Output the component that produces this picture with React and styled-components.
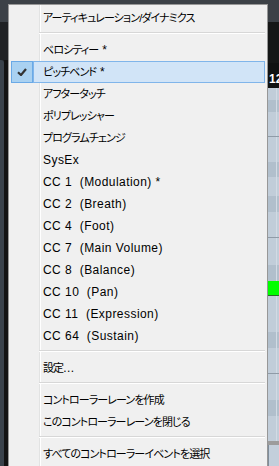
import React from 'react';
import styled, { createGlobalStyle, css } from 'styled-components';

const GlobalStyle = createGlobalStyle`
  html, body {
    margin: 0;
    padding: 0;
    background: #1e2023;
  }
`;

const LIGHT = '#c1cdd9';
const DARK = '#b1bfcc';

const Screen = styled.div`
  position: relative;
  width: 279px;
  height: 466px;
  overflow: hidden;
  display: flex;
  flex-direction: column;
  background: #1e2023;
`;

const TopBar = styled.div`
  flex-shrink: 0;
  height: 22px;
  background: #3c4147;
`;

const Body = styled.div`
  flex: 1;
  display: flex;
  min-height: 0;
`;

const SideStrip = styled.div`
  flex-shrink: 0;
  width: 8px;
  display: flex;
  flex-direction: column;
`;

const SideTop = styled.div`
  height: 38px;
  background: #1f2124;
`;

const SideRail = styled.div`
  flex: 1;
  display: flex;

  &::before {
    content: '';
    width: 4px;
    background: #3a424b;
    border-top-right-radius: 3px;
  }

  &::after {
    content: '';
    flex: 1;
    background: #131313;
  }
`;

const Main = styled.div`
  flex: 1;
  min-width: 0;
  display: flex;
  flex-direction: column;
`;

const RulerTop = styled.div`
  height: 41px;
  background: #151717;
`;

const Ruler = styled.div`
  height: 25px;
  box-sizing: border-box;
  padding: 0 0 2px 261px;
  display: flex;
  align-items: flex-end;
  background: #101212;
  color: #fff;
  font: bold 12px 'Liberation Sans', sans-serif;
  white-space: nowrap;
`;

const Lane = styled.div`
  box-sizing: border-box;
  height: ${p => p.$h}px;
  background-color: ${p => p.$color};
  background-image: linear-gradient(to right, transparent 268px, #d2dbe4 268px, #d2dbe4 269px, transparent 269px);
  ${p => p.$line && css`border-bottom: 1px solid #8f9ba7;`}
  ${p => p.$note && css`
    background: #00ff00;
    border-bottom: 1px solid #2a6a2a;
  `}
`;

const GrayBand = styled.div`
  height: 4px;
  background: #9c9c9c;
`;

const BottomStrip = styled.div`
  flex: 1;
  display: flex;
`;

const BottomGray = styled.div`
  width: 50px;
  background: #a6a6a6;
`;

const BottomCells = styled.div`
  flex: 1;
  background: repeating-linear-gradient(to right, #7f8d9b 0, #7f8d9b 1px, #c3cfdb 1px, #c3cfdb 11.67px);
`;

const Menu = styled.ul`
  position: absolute;
  left: 8px;
  top: 4px;
  width: 260px;
  box-sizing: border-box;
  margin: 0;
  padding: 2px;
  list-style: none;
  background-color: #f0f0f0;
  background-image: linear-gradient(to right, transparent 30px, #e2e3e3 30px, #e2e3e3 31px, #fff 31px, #fff 32px, transparent 32px);
  border: 1px solid #979797;
  color: #000;
  font-family: 'Liberation Sans', 'Noto Sans CJK JP', sans-serif;
  font-size: 12px;
  font-feature-settings: 'palt';
`;

const Item = styled.li`
  display: flex;
  height: 22px;
`;

const CheckCell = styled.span`
  flex-shrink: 0;
  width: 22px;
  height: 22px;
  box-sizing: border-box;
  display: flex;
  align-items: center;
  justify-content: center;
  ${p => p.$active && css`
    background: #a9d1f1;
    border: 1px solid #6aa9e6;
  `}
`;

const Label = styled.span`
  flex: 1;
  box-sizing: border-box;
  padding-left: 10px;
  line-height: 22px;
  white-space: pre;
  ${p => p.$active && css`
    padding-left: 9px;
    line-height: 20px;
    background: #d1e4f7;
    border: 1px solid #80b5ea;
  `}
`;

/* 英数字と日本語で字幅を変える */
const Run = styled.span`
  letter-spacing: 0.45px;
  ${p => p.$jp && css`
    font-size: 11px;
    letter-spacing: -0.9px;
  `}
`;

const Separator = styled.li`
  height: 7px;

  &::before {
    content: '';
    display: block;
    margin: 3px 0 0 28px;
    border-top: 1px solid #d7d7d7;
    border-bottom: 1px solid #fff;
  }
`;

const CheckMark = () => (
  <svg width="10" height="8" viewBox="0 0 10 8">
    <path d="M1 4.2 L4 7 L9 1" fill="none" stroke="#333" strokeWidth="2.2" />
  </svg>
);

const lanes = [
  { h: 12, color: LIGHT },
  { h: 12, color: DARK },
  { h: 25, color: LIGHT, line: true },
  { h: 25, color: LIGHT },
  { h: 15, color: DARK },
  { h: 19, color: LIGHT },
  { h: 16, color: DARK },
  { h: 26, color: LIGHT, line: true },
  { h: 27, color: LIGHT },
  { h: 16, color: DARK },
  { h: 15, note: true },
  { h: 36, color: LIGHT },
  { h: 16, color: DARK },
  { h: 26, color: LIGHT, line: true },
  { h: 26, color: LIGHT },
  { h: 16, color: DARK },
  { h: 25, color: LIGHT },
];

const menu = [
  { label: 'アーティキュレーション/ダイナミクス' },
  { sep: true },
  { label: 'ベロシティー *' },
  { label: 'ピッチベンド *', checked: true, active: true },
  { label: 'アフタータッチ' },
  { label: 'ポリプレッシャー' },
  { label: 'プログラムチェンジ' },
  { label: 'SysEx' },
  { label: 'CC 1  (Modulation) *' },
  { label: 'CC 2  (Breath)' },
  { label: 'CC 4  (Foot)' },
  { label: 'CC 7  (Main Volume)' },
  { label: 'CC 8  (Balance)' },
  { label: 'CC 10  (Pan)' },
  { label: 'CC 11  (Expression)' },
  { label: 'CC 64  (Sustain)' },
  { sep: true },
  { label: '設定...' },
  { sep: true },
  { label: 'コントローラーレーンを作成' },
  { label: 'このコントローラーレーンを閉じる' },
  { sep: true },
  { label: 'すべてのコントローラーイベントを選択' },
];

// 日本語の並び（途中の "/" を含む）と英数字を分ける
const splitRuns = text => text.split(/([^\x00-\x7f](?:[^\x00-\x7f]|\/)*)/).filter(Boolean);
const isJapanese = text => /[^\x00-\x7f]/.test(text);

const App = () => {
  return (
    <>
      <GlobalStyle />
      <Screen>
        <TopBar />
        <Body>
          <SideStrip>
            <SideTop />
            <SideRail />
          </SideStrip>
          <Main>
            <RulerTop />
            <Ruler>12</Ruler>
            {lanes.map((l, i) => (
              <Lane key={i} $h={l.h} $color={l.color} $line={l.line} $note={l.note} />
            ))}
            <GrayBand />
            <BottomStrip>
              <BottomGray />
              <BottomCells />
            </BottomStrip>
          </Main>
        </Body>

        {/* コントローラー選択メニュー */}
        <Menu>
          {menu.map((m, i) =>
            m.sep ? (
              <Separator key={i} />
            ) : (
              <Item key={i}>
                <CheckCell $active={m.active}>{m.checked && <CheckMark />}</CheckCell>
                <Label $active={m.active}>
                  {splitRuns(m.label).map((run, j) => (
                    <Run key={j} $jp={isJapanese(run)}>
                      {run}
                    </Run>
                  ))}
                </Label>
              </Item>
            )
          )}
        </Menu>
      </Screen>
    </>
  );
};

export default App;
